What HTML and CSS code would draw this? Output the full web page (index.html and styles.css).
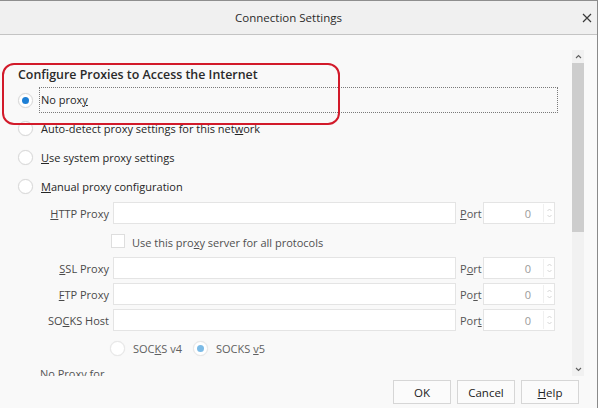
FILE: index.html
```html
<!DOCTYPE html>
<html>
<head>
<meta charset="utf-8">
<link rel="stylesheet" href="styles.css">
</head>
<body>
<div class="window">
  <div class="titlebar">
    <span class="title">Connection Settings</span>
    <svg class="close" width="10" height="10" viewBox="0 0 10 10"><path d="M1 1 L9 9 M9 1 L1 9" stroke="#3a3a3a" stroke-width="1.2"/></svg>
  </div>
  <div class="main">
    <div class="scroll">
      <div class="content">
        <div class="heading">Configure Proxies to Access the Internet</div>
        <div class="radio-row first">
          <span class="radio checked"></span>
          <span class="rlabel focus">No prox<u>y</u></span>
        </div>
        <div class="radio-row">
          <span class="radio"></span>
          <span class="rlabel">Auto-detect proxy settings for this net<u>w</u>ork</span>
        </div>
        <div class="radio-row">
          <span class="radio"></span>
          <span class="rlabel"><u>U</u>se system proxy settings</span>
        </div>
        <div class="radio-row">
          <span class="radio"></span>
          <span class="rlabel"><u>M</u>anual proxy configuration</span>
        </div>
        <div class="grid">
          <label class="plabel"><u>H</u>TTP Proxy</label>
          <div class="field"></div>
          <label class="port"><u>P</u>ort</label>
          <div class="portfield"><span class="val">0</span><span class="spin"><svg width="7" height="14" viewBox="0 0 7 14"><path d="M1.5 5 L3.5 3 L5.5 5 M1.5 9 L3.5 11 L5.5 9" fill="none" stroke="#cfcfcf" stroke-width="0.9"/></svg></span></div>

          <div class="check-row">
            <span class="checkbox"></span>
            <span class="clabel">Use this pro<u>x</u>y server for all protocols</span>
          </div>

          <label class="plabel"><u>S</u>SL Proxy</label>
          <div class="field"></div>
          <label class="port">P<u>o</u>rt</label>
          <div class="portfield"><span class="val">0</span><span class="spin"><svg width="7" height="14" viewBox="0 0 7 14"><path d="M1.5 5 L3.5 3 L5.5 5 M1.5 9 L3.5 11 L5.5 9" fill="none" stroke="#cfcfcf" stroke-width="0.9"/></svg></span></div>

          <label class="plabel"><u>F</u>TP Proxy</label>
          <div class="field"></div>
          <label class="port">Po<u>r</u>t</label>
          <div class="portfield"><span class="val">0</span><span class="spin"><svg width="7" height="14" viewBox="0 0 7 14"><path d="M1.5 5 L3.5 3 L5.5 5 M1.5 9 L3.5 11 L5.5 9" fill="none" stroke="#cfcfcf" stroke-width="0.9"/></svg></span></div>

          <label class="plabel">SO<u>C</u>KS Host</label>
          <div class="field"></div>
          <label class="port">Por<u>t</u></label>
          <div class="portfield"><span class="val">0</span><span class="spin"><svg width="7" height="14" viewBox="0 0 7 14"><path d="M1.5 5 L3.5 3 L5.5 5 M1.5 9 L3.5 11 L5.5 9" fill="none" stroke="#cfcfcf" stroke-width="0.9"/></svg></span></div>

          <div class="socks-row">
            <span class="radio disabled"></span>
            <span class="slabel">SOC<u>K</u>S v4</span>
            <span class="radio disabled checked"></span>
            <span class="slabel">SOCKS <u>v</u>5</span>
          </div>
        </div>
        <div class="noproxy">No Proxy for</div>
      </div>
      <div class="scrollbar">
        <div class="sb-arrow"><svg width="7" height="5" viewBox="0 0 7 5"><path d="M1 4 L3.5 1.5 L6 4" fill="none" stroke="#606060" stroke-width="1.1"/></svg></div>
        <div class="sb-track"><div class="sb-thumb"></div></div>
        <div class="sb-arrow"><svg width="7" height="5" viewBox="0 0 7 5"><path d="M1 1 L3.5 3.5 L6 1" fill="none" stroke="#606060" stroke-width="1.1"/></svg></div>
      </div>
    </div>
    <div class="footer">
      <button class="btn">OK</button>
      <button class="btn">Cancel</button>
      <button class="btn"><u>H</u>elp</button>
    </div>
    <div class="annotation"></div>
  </div>
</div>
</body>
</html>
```
FILE: styles.css
```css
* { box-sizing: border-box; }
html, body { margin: 0; padding: 0; background: #ffffff; }
body {
  font-family: "Open Sans", "Noto Sans", sans-serif;
  font-size: 11px;
  color: #222;
}
.window {
  width: 598px;
  height: 408px;
  border-top: 1px solid #8e8e8e;
  border-right: 1px solid #8a8a8a;
  background: #f9f9f9;
  display: flex;
  flex-direction: column;
  overflow: hidden;
}
.titlebar {
  height: 34px;
  flex: none;
  background: #f0f0f0;
  border-bottom: 1px solid #c4c4c4;
  display: flex;
  align-items: center;
  justify-content: center;
  position: relative;
}
.title { font-size: 11.5px; color: #2b2b2b; margin-left: -20px; }
.close { position: absolute; right: 5px; top: 12px; }
.main { position: relative; flex: 1; display: flex; flex-direction: column; }
.scroll { height: 341px; display: flex; flex: none; }
.content {
  flex: 1;
  padding: 31px 14px 0 18px;
  overflow: hidden;
}
.heading {
  height: 18px;
  line-height: 18px;
  font-size: 12.4px;
  font-weight: 600;
  color: #2a2a2a;
}
.radio-row {
  height: 28px;
  display: flex;
  align-items: center;
  margin-top: 1px;
}
.radio-row.first { height: 26px; margin-top: 3px; margin-bottom: 1px; }
.radio {
  width: 15px;
  height: 15px;
  border-radius: 50%;
  border: 1px solid #d8d8d8;
  background: #fff;
  box-shadow: 0 0 1px #e6e6e6;
  flex: none;
  position: relative;
}
.radio.checked::after {
  content: "";
  position: absolute;
  left: 3px; top: 3px;
  width: 7px; height: 7px;
  border-radius: 50%;
  background: #1d7fd5;
}
.radio.disabled { border-color: #e6e6e6; }
.radio.disabled.checked::after { background: #7cbbe6; }
.rlabel { margin-left: 8px; color: #262626; }
.rlabel.focus {
  flex: 1;
  height: 26px;
  line-height: 24px;
  border: 1px dotted #7a7a7a;
  padding-left: 1px;
  margin-left: 6px;
}
.grid {
  margin-top: 2px;
  display: grid;
  grid-template-columns: 95px 347px 23px 72px;
  grid-template-rows: 22px 25px 22px 22px 22px 26px;
  row-gap: 4px;
  align-items: center;
  color: #4a4a4a;
}
.plabel { text-align: right; padding-right: 4px; }
.field { width: 343px; height: 22px; background: #fff; border: 1px solid #e4e4e4; }
.port { color: #555; }
.portfield {
  height: 22px;
  background: #fff;
  border: 1px solid #e4e4e4;
  display: flex;
  align-items: center;
  justify-content: flex-end;
}
.val { color: #9a9a9a; margin-right: 12px; }
.spin { width: 11px; display: flex; justify-content: center; border-left: 1px solid #f0f0f0; height: 18px; align-items: center; }
.check-row {
  grid-column: 2 / 5;
  margin-left: -2px;
  display: flex;
  align-items: center;
  align-self: stretch;
}
.checkbox {
  width: 14px; height: 14px;
  border: 1px solid #dedede;
  background: #fff;
  flex: none;
}
.clabel { margin-left: 7px; color: #505050; margin-top: 3px; }
.socks-row {
  grid-column: 2 / 5;
  margin-left: -3px;
  display: flex;
  align-items: center;
  align-self: stretch;
  color: #606060;
}
.slabel { margin-left: 8px; margin-right: 11px; }
.noproxy { padding-left: 22px; margin-top: 5px; color: #555; }
.scrollbar {
  width: 12px;
  margin-top: 15px;
  margin-right: 13px;
  display: flex;
  flex-direction: column;
  background: #f1f1f1;
}
.sb-arrow { height: 13px; display: flex; align-items: center; justify-content: center; flex: none; }
.sb-track { flex: 1; }
.sb-thumb { height: 169px; background: #cdcdcd; }
.footer {
  flex: 1;
  display: flex;
  justify-content: flex-end;
  align-items: flex-start;
  gap: 6px;
  padding: 4px 18px 0 0;
}
.btn {
  width: 58px;
  height: 24px;
  font-family: inherit;
  font-size: 11.5px;
  color: #222;
  background: #fbfbfb;
  border: 1px solid #d6d6d6;
  border-radius: 0;
  padding: 0;
}
.annotation {
  position: absolute;
  left: 2px;
  top: 28px;
  width: 338px;
  height: 62px;
  border: 2px solid #d21a2a;
  border-radius: 12px;
}
```
